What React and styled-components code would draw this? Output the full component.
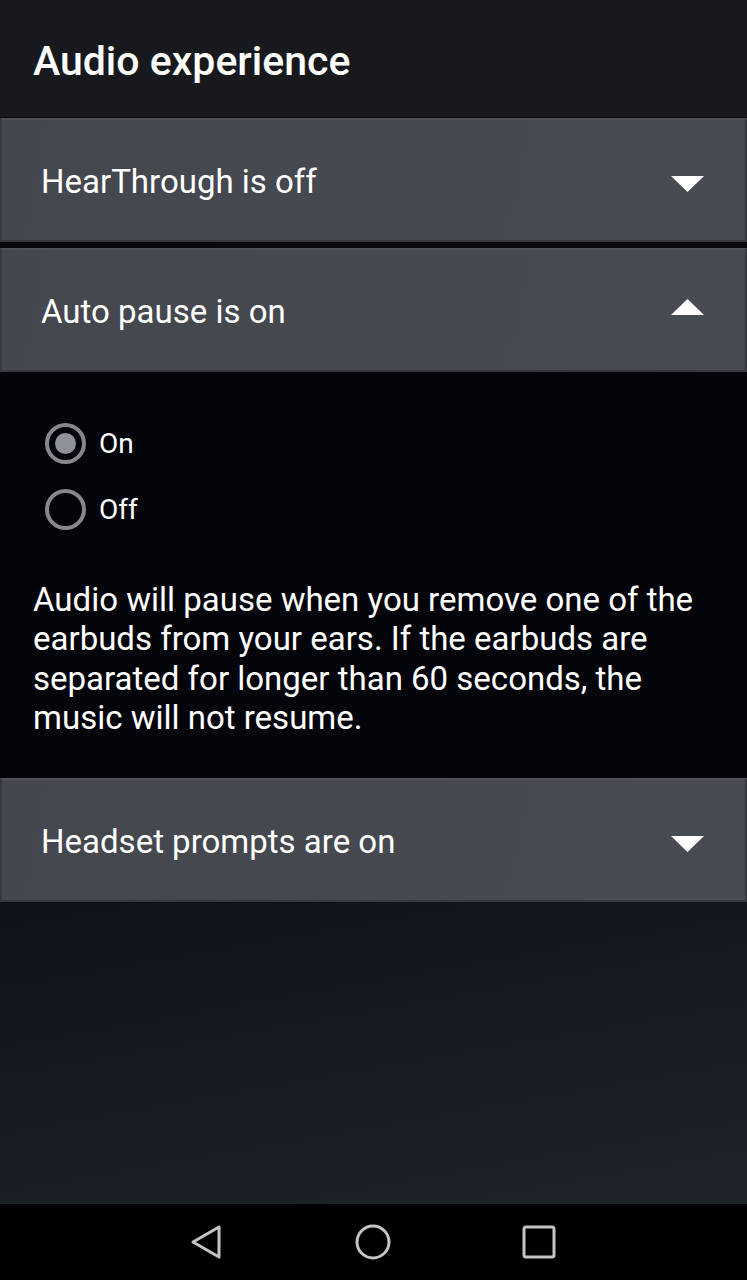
import React, { useState } from 'react';
import styled, { createGlobalStyle } from 'styled-components';

const GlobalStyle = createGlobalStyle`
	html, body {
		margin: 0;
		padding: 0;
		background: #000;
	}
	* {
		box-sizing: border-box;
	}
`;

const Screen = styled.div`
	width: 747px;
	height: 1280px;
	display: flex;
	flex-direction: column;
	font-family: Roboto, 'Noto Sans', sans-serif;
	color: #fff;
	background: #05070b;
	overflow: hidden;
`;

const Header = styled.header`
	height: 118px;
	flex-shrink: 0;
	display: flex;
	align-items: center;
	padding: 4px 33px 0;
	background: #17191d;
	border-bottom: 1px solid #07090c;
	h1 {
		margin: 0;
		font-size: 41px;
		font-weight: 500;
	}
`;

const Content = styled.main`
	flex: 1;
	display: flex;
	flex-direction: column;
	background: linear-gradient(170deg, #05070c 0%, #0b0e14 55%, #20232a 100%);
`;

const Section = styled.div`
	display: flex;
	flex-direction: column;
	margin-top: ${(props) => (props.first ? '0' : '6px')};
`;

const SectionHead = styled.button`
	height: 124px;
	display: flex;
	align-items: center;
	justify-content: space-between;
	padding: 0 41px 0 39px;
	background: linear-gradient(100deg, #44474d 0%, #46494f 60%, #484b52 100%);
	border: 2px solid #35383d;
	border-top-color: #4f5258;
	color: #fff;
	font-family: inherit;
	font-size: 33px;
	font-weight: 400;
	text-align: left;
	cursor: pointer;
	span {
		padding-top: 3px;
	}
	svg {
		margin-top: ${(props) => (props.open ? '-6px' : '8px')};
	}
`;

const Arrow = ({ up }) => (
	<svg width="33" height="16" viewBox="0 0 33 16">
		{up ? (
			<polygon points="0,16 16.5,0 33,16" fill="#fff" />
		) : (
			<polygon points="0,0 33,0 16.5,16" fill="#fff" />
		)}
	</svg>
);

const Body = styled.div`
	background: #04050a;
	padding: 51px 33px 40px;
	display: flex;
	flex-direction: column;
`;

const RadioGroup = styled.div`
	display: flex;
	flex-direction: column;
	gap: 25px;
	padding-left: 12px;
	margin-bottom: 50px;
`;

const RadioRow = styled.label`
	display: flex;
	align-items: center;
	gap: 13px;
	font-size: 28px;
	cursor: pointer;
`;

const RadioCircle = styled.span`
	width: 41px;
	height: 41px;
	border-radius: 50%;
	border: 4px solid #85888d;
	display: flex;
	align-items: center;
	justify-content: center;
	&::after {
		content: '';
		width: 21px;
		height: 21px;
		border-radius: 50%;
		background: ${(props) => (props.checked ? '#8e9298' : 'transparent')};
	}
`;

const Description = styled.p`
	margin: 0;
	font-size: 33px;
	line-height: 39.4px;
	color: #fff;
`;

const NavBar = styled.nav`
	height: 76px;
	flex-shrink: 0;
	background: #000;
	display: flex;
	align-items: center;
	justify-content: center;
	gap: 130px;
	padding-right: 2px;
`;

const NavIcon = styled.svg`
	width: 36px;
	height: 36px;
	stroke: #c4c4c4;
	stroke-width: 3;
	fill: none;
	stroke-linejoin: round;
`;

const App = () => {
	const [choice, setChoice] = useState('on');

	return (
		<>
			<GlobalStyle />
			<Screen>
				<Header>
					<h1>Audio experience</h1>
				</Header>
				<Content>
					<Section first>
						<SectionHead>
							<span>HearThrough is off</span>
							<Arrow />
						</SectionHead>
					</Section>
					<Section>
						<SectionHead open>
							<span>Auto pause is on</span>
							<Arrow up />
						</SectionHead>
						<Body>
							<RadioGroup>
								<RadioRow onClick={() => setChoice('on')}>
									<RadioCircle checked={choice === 'on'} />
									On
								</RadioRow>
								<RadioRow onClick={() => setChoice('off')}>
									<RadioCircle checked={choice === 'off'} />
									Off
								</RadioRow>
							</RadioGroup>
							<Description>
								Audio will pause when you remove one of the earbuds from your
								ears. If the earbuds are separated for longer than 60 seconds,
								the music will not resume.
							</Description>
						</Body>
					</Section>
					<Section first>
						<SectionHead>
							<span>Headset prompts are on</span>
							<Arrow />
						</SectionHead>
					</Section>
				</Content>
				<NavBar>
					<NavIcon viewBox="0 0 36 36">
						<polygon points="30,3 30,33 4,18" />
					</NavIcon>
					<NavIcon viewBox="0 0 36 36">
						<circle cx="18" cy="18" r="16" />
					</NavIcon>
					<NavIcon viewBox="0 0 36 36">
						<rect x="3" y="3" width="30" height="30" rx="2" />
					</NavIcon>
				</NavBar>
			</Screen>
		</>
	);
};

export default App;
